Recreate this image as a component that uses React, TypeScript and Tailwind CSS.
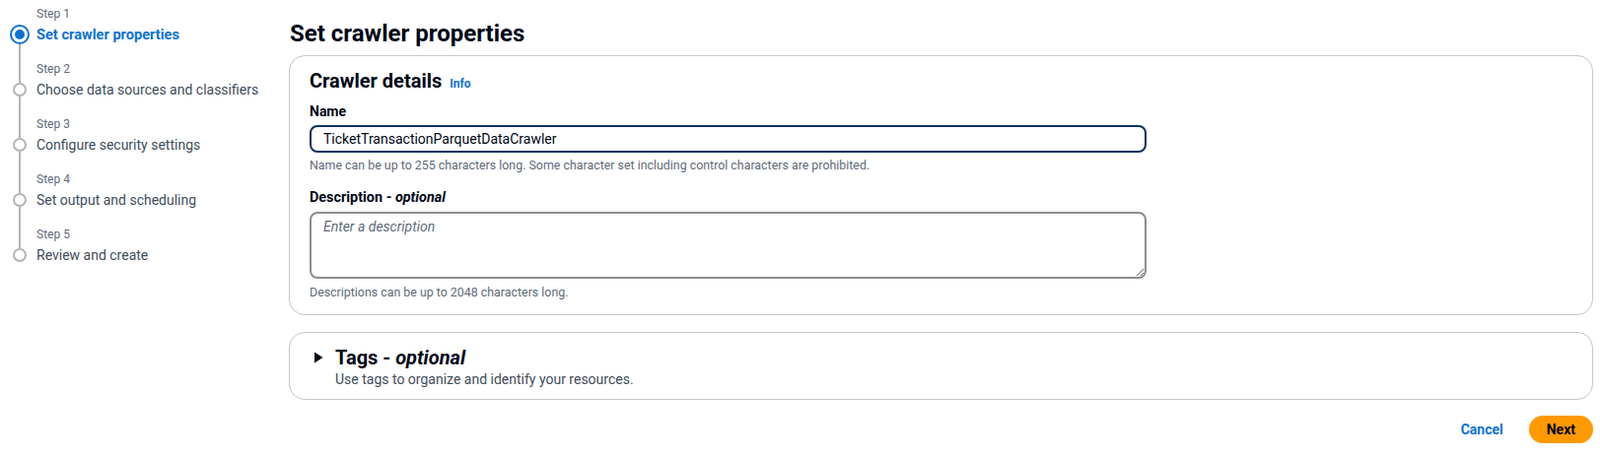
import React from "react"

const steps = [
  { label: "Step 1", title: "Set crawler properties" },
  { label: "Step 2", title: "Choose data sources and classifiers" },
  { label: "Step 3", title: "Configure security settings" },
  { label: "Step 4", title: "Set output and scheduling" },
  { label: "Step 5", title: "Review and create" },
]

function StepNav() {
  return (
    <nav className="w-[293px] shrink-0 pl-[10px] pt-[6px]">
      {steps.map((s, i) => {
        const active = i === 0
        const last = i === steps.length - 1
        return (
          <div key={s.label} className="flex h-[56px] gap-[7px]">
            <div className="flex w-[20px] flex-col items-center">
              <div className={active ? "h-[19px] w-[2px]" : "h-[22px] w-[2px] bg-[#b4b4bb]"} />
              {active ? (
                <div className="flex h-[20px] w-[20px] items-center justify-center rounded-full border-[2.5px] border-[#0972d3] bg-white">
                  <div className="h-[10px] w-[10px] rounded-full bg-[#0972d3]" />
                </div>
              ) : (
                <div className="h-[14px] w-[14px] rounded-full border-2 border-[#b4b4bb] bg-white" />
              )}
              <div className={last ? "w-[2px] flex-1" : "w-[2px] flex-1 bg-[#b4b4bb]"} />
            </div>
            <div>
              <div className="text-[12px] leading-[16px] text-[#5f6b7a]">{s.label}</div>
              <div
                className={
                  active
                    ? "mt-[3px] text-[14.6px] font-bold leading-[20px] text-[#0972d3]"
                    : "mt-[3px] text-[14px] leading-[20px] text-[#414d5c]"
                }
              >
                {s.title}
              </div>
            </div>
          </div>
        )
      })}
    </nav>
  )
}

export default function App() {
  return (
    <main
      className="flex min-h-[464px] w-full bg-white text-[#000716]"
      style={{ fontFamily: "Roboto, 'Open Sans', sans-serif" }}
    >
      <StepNav />
      <div className="flex-1 pr-[7px]">
        <h1 className="pl-[1px] pt-[19px] text-[24px] font-bold leading-[30px]">Set crawler properties</h1>

        {/* Crawler details */}
        <section className="mt-[7px] rounded-[16px] border border-[#c6c6cd] px-[20px] pt-[13px] pb-[14px]">
          <div className="flex items-baseline gap-[8px]">
            <h2 className="text-[20px] font-bold leading-[24px]">Crawler details</h2>
            <a className="text-[12px] font-bold text-[#0972d3]">Info</a>
          </div>

          <label className="mt-[9px] block text-[14px] font-bold leading-[20px]">Name</label>
          <input
            readOnly
            value="TicketTransactionParquetDataCrawler"
            className="mt-[4px] block h-[28px] w-[849px] rounded-[8px] border-2 border-[#033160] px-[12px] text-[14px] text-[#000716] outline-none"
          />
          <p className="mt-[5px] text-[12.4px] leading-[16px] text-[#5f6b7a]">
            Name can be up to 255 characters long. Some character set including control characters are prohibited.
          </p>

          <label className="mt-[15px] block text-[14.4px] font-bold leading-[20px]">
            Description - <i>optional</i>
          </label>
          <textarea
            placeholder="Enter a description"
            className="mt-[4px] block h-[68px] w-[849px] rounded-[8px] border-2 border-[#8c8c94] px-[12px] py-[3px] text-[14px] italic leading-[20px] outline-none placeholder:text-[#5f6b7a]"
          />
          <p className="mt-[6px] text-[12.4px] leading-[16px] text-[#5f6b7a]">
            Descriptions can be up to 2048 characters long.
          </p>
        </section>

        {/* Tags */}
        <section className="mt-[17px] flex rounded-[16px] border border-[#c6c6cd] pl-[24px] pt-[13px] pb-[10px]">
          <svg width="10" height="12" viewBox="0 0 10 12" className="mt-[6px] shrink-0">
            <path d="M1 0.5 L9.5 6 L1 11.5 Z" fill="#000716" />
          </svg>
          <div className="ml-[12px]">
            <h2 className="text-[20px] font-bold leading-[24px]">
              Tags - <i>optional</i>
            </h2>
            <p className="text-[14px] leading-[20px] text-[#414d5c]">Use tags to organize and identify your resources.</p>
          </div>
        </section>

        <div className="mt-[16px] flex items-center justify-end gap-[26px]">
          <button className="text-[14px] font-bold text-[#0972d3]">Cancel</button>
          <button className="h-[28px] rounded-full bg-[#ff9900] px-[18px] text-[14px] font-bold text-[#000716]">
            Next
          </button>
        </div>
      </div>
    </main>
  )
}
